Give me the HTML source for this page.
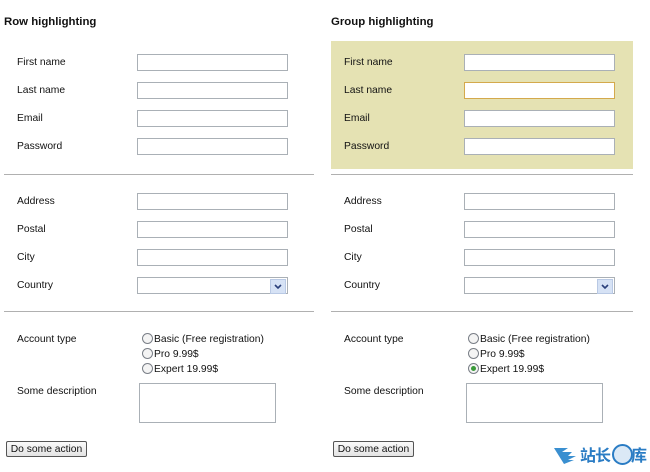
<!DOCTYPE html>
<html><head><meta charset="utf-8"><style>
body{margin:0;width:650px;height:472px;background:#fff;font-family:"Liberation Sans",Arial,sans-serif;color:#111;position:relative;overflow:hidden}
.a{position:absolute}
h{position:absolute;font-weight:bold;font-size:11.4px}
.l{position:absolute;font-size:10.3px;line-height:13px;margin-top:1px}
.i{position:absolute;width:149px;height:15px;border:1px solid #aab0b6;background:#fff;box-sizing:content-box}
.sep{position:absolute;height:1px;background:#b0b0b0}
.r{position:absolute;width:9px;height:9px;border:1px solid #7a7f87;border-radius:50%;background:#f4f4f4}
.rt{position:absolute;font-size:10.3px;line-height:13px;margin-top:1px}
.ta{position:absolute;width:135px;height:38px;border:1px solid #aab0b6;background:#fff}
.btn{position:absolute;width:79px;height:14px;border:1px solid #555;border-radius:2px;background:linear-gradient(#fafafa,#e4e4e4);font-size:10.3px;line-height:15px;text-align:center}
.dd{position:absolute;width:14px;height:13px;background:#d6e2f5;border:1px solid #b9c9e4;right:1px;top:1px}
</style></head><body>
<h style="left:4px;top:16px">Row highlighting</h>
<h style="left:331px;top:16px">Group highlighting</h>
<div class="a" style="left:331px;top:41px;width:302px;height:128px;background:#e5e2b3"></div>

<div class="l" style="left:17px;top:55px">First name</div><div class="i" style="left:137px;top:54px"></div>
<div class="l" style="left:17px;top:83px">Last name</div><div class="i" style="left:137px;top:82px"></div>
<div class="l" style="left:17px;top:111px">Email</div><div class="i" style="left:137px;top:110px"></div>
<div class="l" style="left:17px;top:139px">Password</div><div class="i" style="left:137px;top:138px"></div>
<div class="sep" style="left:4px;top:174px;width:310px"></div>
<div class="l" style="left:17px;top:194px">Address</div><div class="i" style="left:137px;top:193px"></div>
<div class="l" style="left:17px;top:222px">Postal</div><div class="i" style="left:137px;top:221px"></div>
<div class="l" style="left:17px;top:250px">City</div><div class="i" style="left:137px;top:249px"></div>
<div class="l" style="left:17px;top:278px">Country</div><div class="i" style="left:137px;top:277px"><div class="dd"><svg width="14" height="13"><path d="M4 5l3 3 3-3" stroke="#2a3f7a" stroke-width="1.6" fill="none"/></svg></div></div>
<div class="sep" style="left:4px;top:311px;width:310px"></div>
<div class="l" style="left:17px;top:332px">Account type</div>
<div class="r" style="left:142px;top:333px"></div><div class="rt" style="left:154px;top:332px">Basic (Free registration)</div>
<div class="r" style="left:142px;top:348px"></div><div class="rt" style="left:154px;top:347px">Pro 9.99$</div>
<div class="r" style="left:142px;top:363px"></div><div class="rt" style="left:154px;top:362px">Expert 19.99$</div>
<div class="l" style="left:17px;top:384px">Some description</div>
<div class="ta" style="left:139px;top:383px"></div>
<div class="btn" style="left:6px;top:441px">Do some action</div>

<div class="l" style="left:344px;top:55px">First name</div><div class="i" style="left:464px;top:54px"></div>
<div class="l" style="left:344px;top:83px">Last name</div><div class="i" style="left:464px;top:82px;border-color:#d4a94c"></div>
<div class="l" style="left:344px;top:111px">Email</div><div class="i" style="left:464px;top:110px"></div>
<div class="l" style="left:344px;top:139px">Password</div><div class="i" style="left:464px;top:138px"></div>
<div class="sep" style="left:331px;top:174px;width:302px"></div>
<div class="l" style="left:344px;top:194px">Address</div><div class="i" style="left:464px;top:193px"></div>
<div class="l" style="left:344px;top:222px">Postal</div><div class="i" style="left:464px;top:221px"></div>
<div class="l" style="left:344px;top:250px">City</div><div class="i" style="left:464px;top:249px"></div>
<div class="l" style="left:344px;top:278px">Country</div><div class="i" style="left:464px;top:277px"><div class="dd"><svg width="14" height="13"><path d="M4 5l3 3 3-3" stroke="#2a3f7a" stroke-width="1.6" fill="none"/></svg></div></div>
<div class="sep" style="left:331px;top:311px;width:302px"></div>
<div class="l" style="left:344px;top:332px">Account type</div>
<div class="r" style="left:468px;top:333px"></div><div class="rt" style="left:480px;top:332px">Basic (Free registration)</div>
<div class="r" style="left:468px;top:348px"></div><div class="rt" style="left:480px;top:347px">Pro 9.99$</div>
<div class="r" style="left:468px;top:363px"><div class="a" style="left:2px;top:2px;width:5px;height:5px;border-radius:50%;background:#3a9a3a"></div></div><div class="rt" style="left:480px;top:362px">Expert 19.99$</div>
<div class="l" style="left:344px;top:384px">Some description</div>
<div class="ta" style="left:466px;top:383px"></div>
<div class="btn" style="left:333px;top:441px">Do some action</div>

<svg class="a" style="left:552px;top:442px" width="28" height="26"><path d="M2 6h14l-6 4h10l-4 4h8l-8 4h6l-10 4z" fill="#3a8fd0"/></svg>
<div class="a" style="left:580px;top:444px;font-family:'Noto Sans CJK SC',sans-serif;font-weight:bold;font-size:16px;color:#2a7cc4;line-height:20px;letter-spacing:-1px">站长</div>
<div class="a" style="left:612px;top:444px;width:17px;height:17px;border-radius:50%;border:2px solid #2a7cc4;background:#dbe9f6"></div>
<div class="a" style="left:631px;top:444px;font-family:'Noto Sans CJK SC',sans-serif;font-weight:bold;font-size:16px;color:#2a7cc4;line-height:20px">库</div>
</body></html>
